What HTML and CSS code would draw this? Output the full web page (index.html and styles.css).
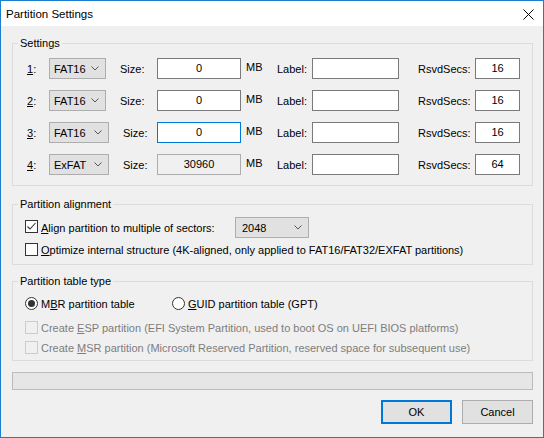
FILE: index.html
```html
<!DOCTYPE html>
<html>
<head>
<meta charset="utf-8">
<link rel="stylesheet" href="styles.css">
</head>
<body>
<div class="window">
  <div class="titlebar">
    <span class="title">Partition Settings</span>
    <svg class="close" width="11" height="11" viewBox="0 0 11 11"><path d="M0.5 0.5L10.5 10.5M10.5 0.5L0.5 10.5" stroke="#000" stroke-width="1" fill="none"/></svg>
  </div>
  <div class="content">
    <fieldset class="group settings">
      <legend>Settings</legend>
      <div class="rows">
        <div class="part-row">
          <span class="num"><u>1</u>:</span>
          <div class="combo combo-narrow"><span>FAT16</span><svg class="chev" width="8" height="5" viewBox="0 0 8 5"><path d="M0.5 0.5L4 4L7.5 0.5" stroke="#555" fill="none"/></svg></div>
          <span class="lbl">Size:</span>
          <div class="field">0</div>
          <span class="unit">MB</span>
          <span class="lbl">Label:</span>
          <div class="field"></div>
          <span class="lbl rsvd">RsvdSecs:</span>
          <div class="field">16</div>
        </div>
        <div class="part-row">
          <span class="num"><u>2</u>:</span>
          <div class="combo combo-narrow"><span>FAT16</span><svg class="chev" width="8" height="5" viewBox="0 0 8 5"><path d="M0.5 0.5L4 4L7.5 0.5" stroke="#555" fill="none"/></svg></div>
          <span class="lbl">Size:</span>
          <div class="field">0</div>
          <span class="unit">MB</span>
          <span class="lbl">Label:</span>
          <div class="field"></div>
          <span class="lbl rsvd">RsvdSecs:</span>
          <div class="field">16</div>
        </div>
        <div class="part-row">
          <span class="num"><u>3</u>:</span>
          <div class="combo"><span>FAT16</span><svg class="chev" width="8" height="5" viewBox="0 0 8 5"><path d="M0.5 0.5L4 4L7.5 0.5" stroke="#555" fill="none"/></svg></div>
          <span class="lbl shifted">Size:</span>
          <div class="field focused">0</div>
          <span class="unit">MB</span>
          <span class="lbl">Label:</span>
          <div class="field"></div>
          <span class="lbl rsvd">RsvdSecs:</span>
          <div class="field">16</div>
        </div>
        <div class="part-row">
          <span class="num"><u>4</u>:</span>
          <div class="combo"><span>ExFAT</span><svg class="chev" width="8" height="5" viewBox="0 0 8 5"><path d="M0.5 0.5L4 4L7.5 0.5" stroke="#555" fill="none"/></svg></div>
          <span class="lbl shifted">Size:</span>
          <div class="field disabled">30960</div>
          <span class="unit">MB</span>
          <span class="lbl">Label:</span>
          <div class="field"></div>
          <span class="lbl rsvd">RsvdSecs:</span>
          <div class="field">64</div>
        </div>
      </div>
    </fieldset>

    <fieldset class="group alignment">
      <legend>Partition alignment</legend>
      <div class="opts">
        <div class="check-row align-row">
          <span class="checkbox"><svg width="13" height="13" viewBox="0 0 13 13"><path d="M2.5 6.5L5 9L10.5 3" stroke="#333" stroke-width="1.1" fill="none"/></svg></span>
          <span class="align-text"><u>A</u>lign partition to multiple of sectors:</span>
          <div class="combo combo-sectors"><span>2048</span><svg class="chev" width="8" height="5" viewBox="0 0 8 5"><path d="M0.5 0.5L4 4L7.5 0.5" stroke="#555" fill="none"/></svg></div>
        </div>
        <div class="check-row">
          <span class="checkbox"></span>
          <span><u>O</u>ptimize internal structure (4K-aligned, only applied to FAT16/FAT32/EXFAT partitions)</span>
        </div>
      </div>
    </fieldset>

    <fieldset class="group tabletype">
      <legend>Partition table type</legend>
      <div class="opts">
        <div class="radio-row">
          <div class="radio-opt first">
            <span class="radio checked"></span>
            <span>M<u>B</u>R partition table</span>
          </div>
          <div class="radio-opt">
            <span class="radio"></span>
            <span><u>G</u>UID partition table (GPT)</span>
          </div>
        </div>
        <div class="check-row disabled esp">
          <span class="checkbox"></span>
          <span>Create <u>E</u>SP partition (EFI System Partition, used to boot OS on UEFI BIOS platforms)</span>
        </div>
        <div class="check-row disabled msr">
          <span class="checkbox"></span>
          <span>Create <u>M</u>SR partition (Microsoft Reserved Partition, reserved space for subsequent use)</span>
        </div>
      </div>
    </fieldset>

    <div class="progress"></div>

    <div class="buttons">
      <button class="btn default">OK</button>
      <button class="btn">Cancel</button>
    </div>
  </div>
</div>
</body>
</html>
```
FILE: styles.css
```css
* { box-sizing: border-box; }
html, body { margin: 0; padding: 0; }
body {
  font-family: "Liberation Sans", Arial, sans-serif;
  font-size: 11px;
  color: #000;
  background: #f0f0f0;
}
.window {
  width: 544px;
  height: 438px;
  border: 1px solid #1a7dcf;
  background: #f0f0f0;
  display: flex;
  flex-direction: column;
}
.titlebar {
  height: 25px;
  background: #fff;
  display: flex;
  align-items: center;
  justify-content: space-between;
  padding: 0 9px 0 5px;
  flex-shrink: 0;
}
.title { font-size: 11.5px; }
.close { display: block; margin-top: 2px; }
.content {
  padding: 0 10px 0 11px;
  display: flex;
  flex-direction: column;
}
.group {
  margin: 0;
  border: 1px solid #dcdcdc;
  padding: 0;
  min-inline-size: 0;
}
.group legend {
  margin-left: 5px;
  padding: 0 2px;
  line-height: 14px;
  font-size: 11px;
}
.settings { margin-top: 10px; }
.rows {
  padding: 8px 0 10px 14px;
  display: flex;
  flex-direction: column;
  gap: 11px;
}
.part-row {
  display: grid;
  grid-template-columns: 22px 71px 37px 84px 36px 35px 87px 76px 45px;
  align-items: center;
  height: 21px;
}
.lbl.shifted { padding-left: 3px; }
.lbl.rsvd { padding-left: 19px; }
.unit { padding-left: 5px; align-self: start; padding-top: 3px; }
.field {
  height: 21px;
  border: 1px solid #7a7a7a;
  background: #fff;
  text-align: center;
  line-height: 19px;
}
.field.focused { border-color: #0078d7; }
.field.disabled { background: #f0f0f0; border-color: #adadad; }
.combo {
  height: 21px;
  width: 60px;
  border: 1px solid #adadad;
  background: #e1e1e1;
  display: flex;
  align-items: center;
  justify-content: space-between;
  padding: 0 6px 0 4px;
}
.combo-narrow { width: 57px; }
.chev { display: block; }
.combo-sectors { width: 74px; padding-left: 6px; }

.alignment { margin-top: 11px; }
.opts {
  padding: 6px 0 7px 12px;
  display: flex;
  flex-direction: column;
}
.check-row {
  display: flex;
  align-items: center;
  height: 15px;
}
.align-row { height: 21px; margin-bottom: 4px; }
.checkbox {
  width: 13px;
  height: 13px;
  border: 1px solid #333;
  background: #fff;
  margin-right: 3px;
  flex-shrink: 0;
  position: relative;
}
.checkbox svg { display: block; margin: -1px; }
.align-row .checkbox { margin-bottom: 3px; }
.align-text { width: 194px; }

.tabletype { margin-top: 9px; }
.tabletype .opts { padding: 8px 0 5px 12px; }
.radio-row { display: flex; align-items: center; height: 15px; margin-bottom: 9px; }
.radio-opt { display: flex; align-items: center; }
.radio-opt.first { width: 147px; }
.radio {
  width: 13px;
  height: 13px;
  border: 1px solid #333;
  border-radius: 50%;
  background: #fff;
  margin-right: 3px;
  display: flex;
  align-items: center;
  justify-content: center;
}
.radio.checked::after {
  content: "";
  width: 7px;
  height: 7px;
  border-radius: 50%;
  background: #333;
}
.check-row.disabled { color: #7d7d7d; }
.check-row.disabled .checkbox { border-color: #cccccc; background: #f0f0f0; }
.check-row.esp { margin-bottom: 5px; }

.progress {
  margin-top: 11px;
  height: 18px;
  border: 1px solid #bcbcbc;
  background: #e6e6e6;
}
.buttons {
  margin-top: 10px;
  display: flex;
  justify-content: flex-end;
  gap: 10px;
}
.btn {
  width: 71px;
  height: 24px;
  border: 1px solid #adadad;
  background: #e1e1e1;
  font-family: inherit;
  font-size: 11px;
  color: #000;
  padding: 0;
  margin: 0;
}
.btn.default { border: 2px solid #0078d7; }
```
